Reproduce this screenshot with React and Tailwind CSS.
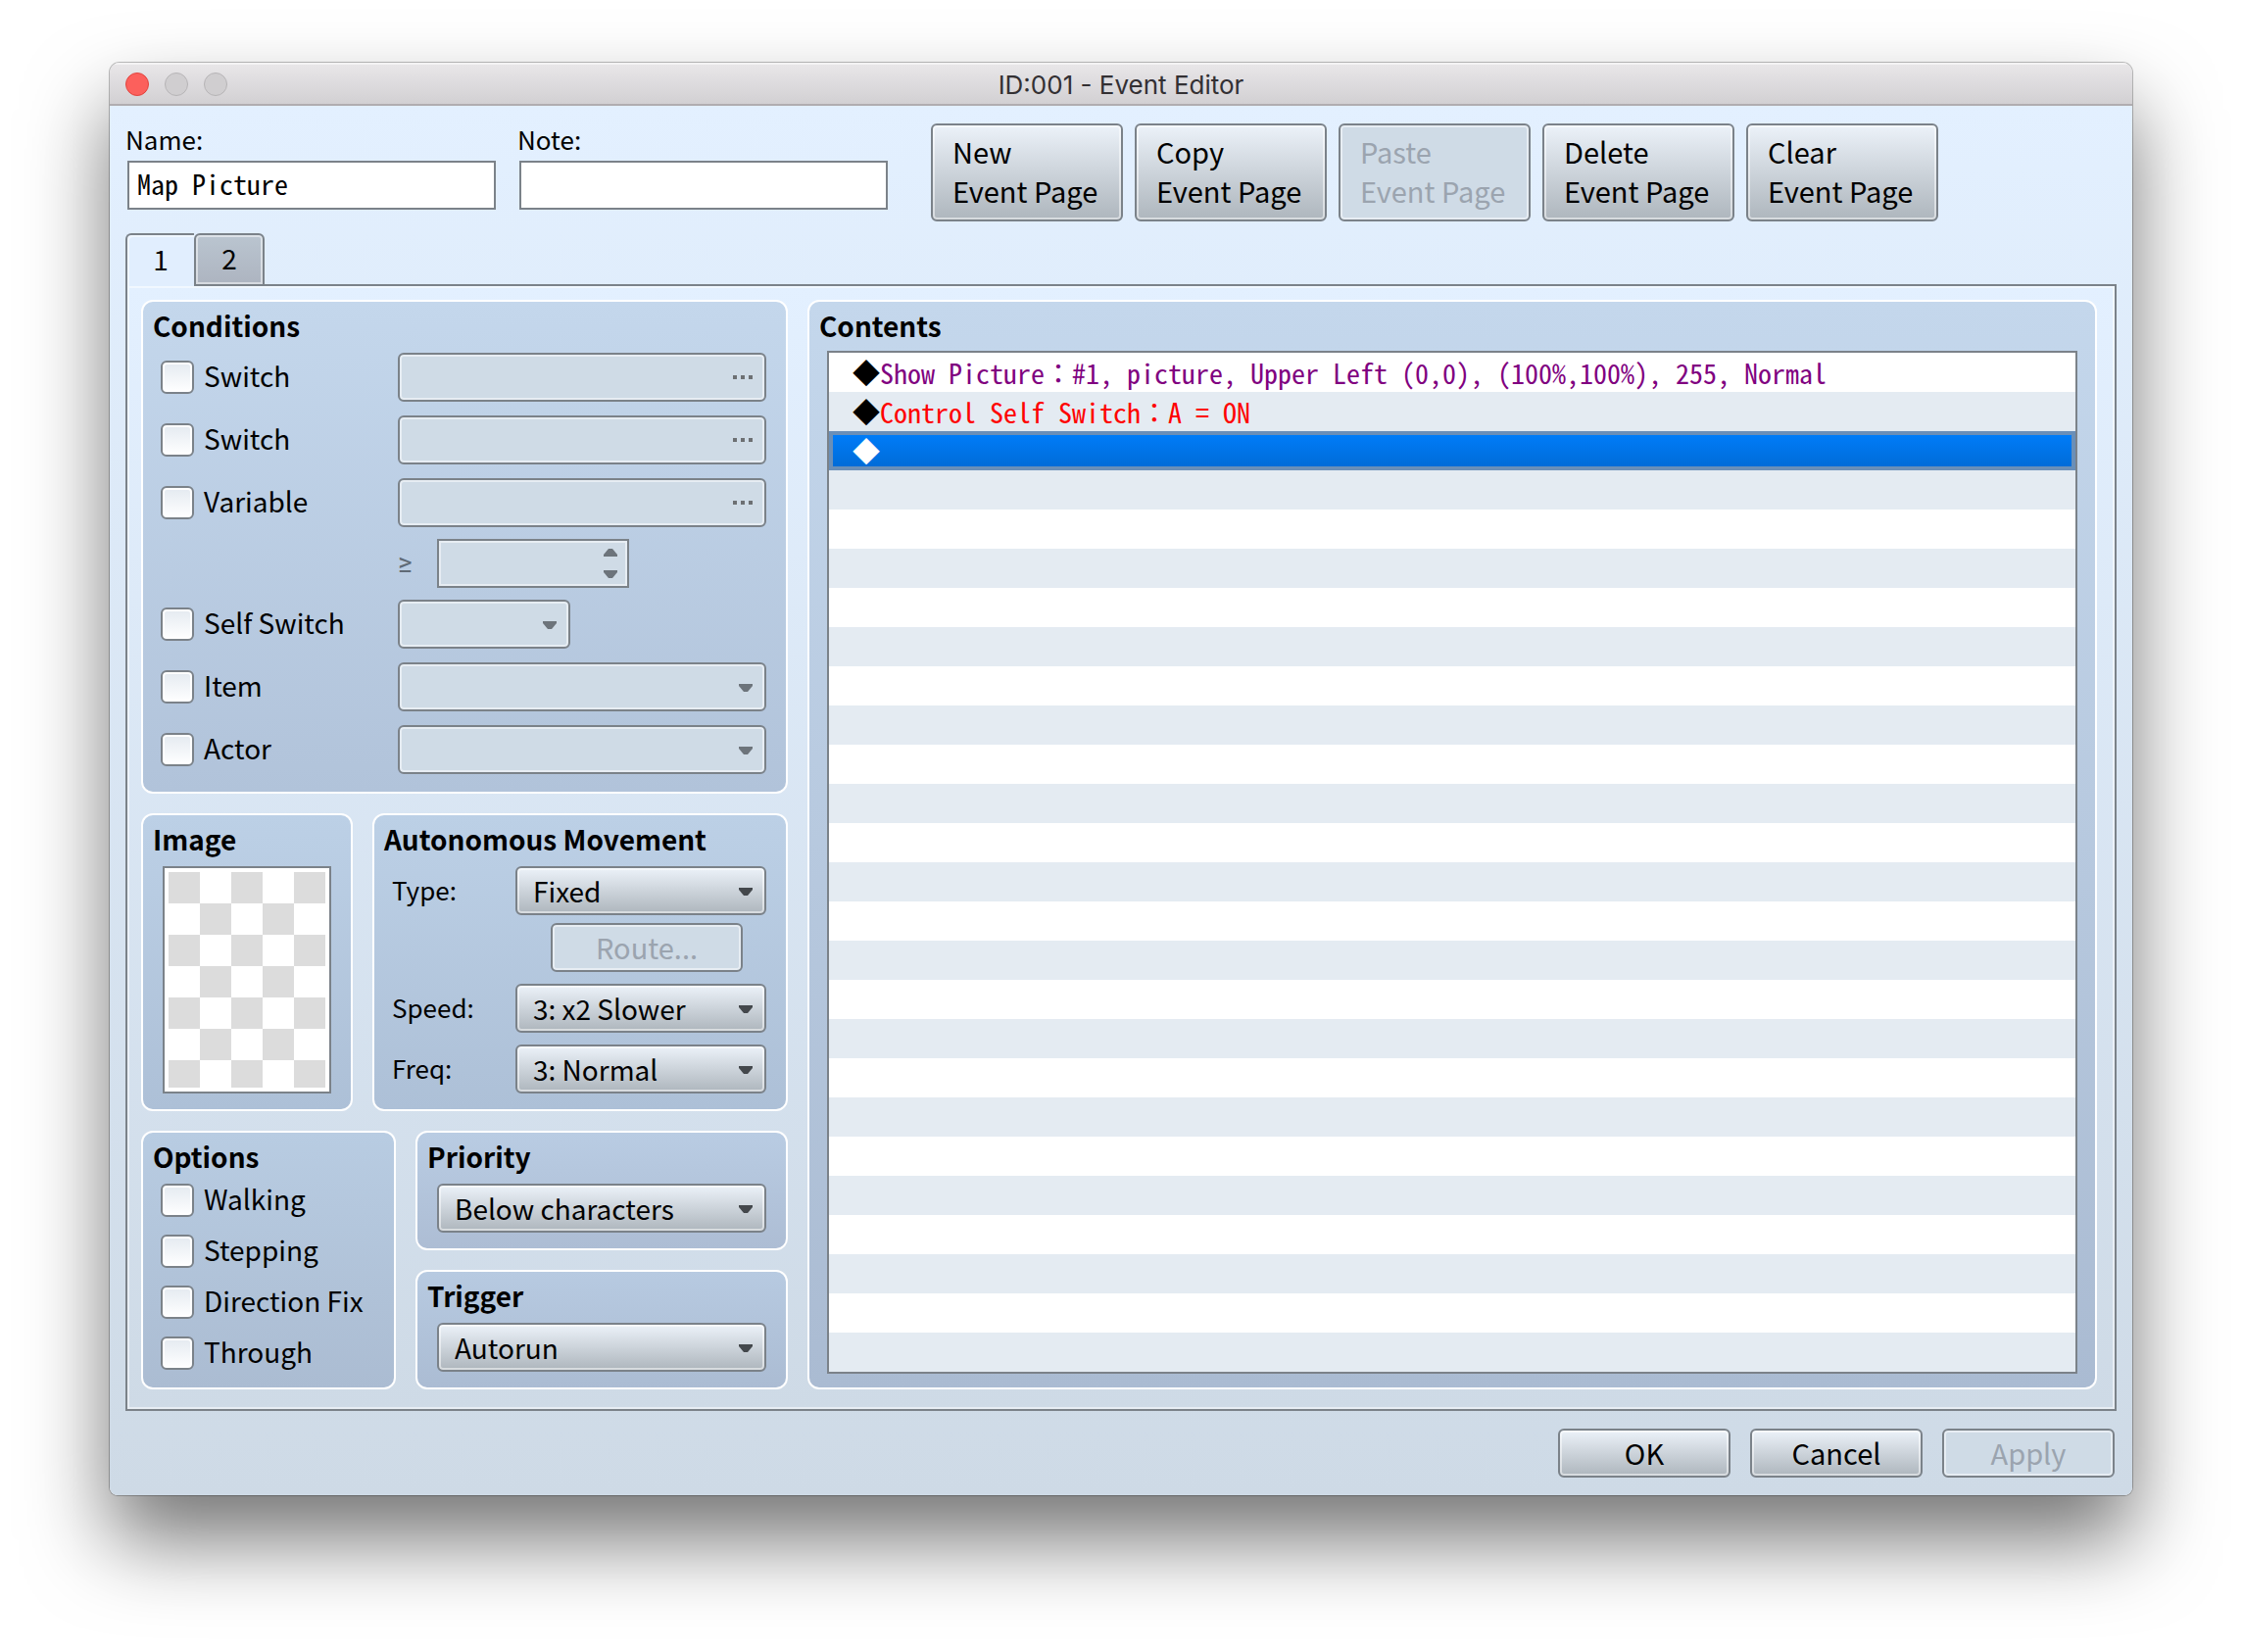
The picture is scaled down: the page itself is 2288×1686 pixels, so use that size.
import React, { useState } from 'react';
import clsx from 'clsx';

const ROW_COUNT = 26;

const commands = [
  { text: 'Show Picture：#1, picture, Upper Left (0,0), (100%,100%), 255, Normal', color: 'text-[#800080]' },
  { text: 'Control Self Switch：A = ON', color: 'text-[#ff0000]' },
  { text: '', color: '' },
];

const pageActions = ['New', 'Copy', 'Paste', 'Delete', 'Clear'];

const Arrow = ({ up, className }) => (
  <svg viewBox="0 0 14 8" className={clsx('pointer-events-none h-2 w-3.5', className)} aria-hidden="true">
    <path d={up ? 'M0 8V6L5 0h4l5 6v2z' : 'M0 0h14v2L9 8H5L0 2z'} fill="currentColor" />
  </svg>
);

const Group = ({ title, className, children }) => (
  <section className={clsx('rounded-xl border-2 border-white bg-linear-to-b', className)}>
    <h2 className="h-12 pl-2.5 text-[28px] font-bold leading-12">{title}</h2>
    {children}
  </section>
);

const Button = ({ className, children, disabled, ...props }) => (
  <button
    type="button"
    disabled={disabled}
    className={clsx(
      'rounded-md border-2 border-[#7b8289] text-[29px]',
      disabled
        ? 'bg-[#cfdbe6] text-[#9ba4af] shadow-[inset_0_0_0_2px_#e7edf3]'
        : 'bg-linear-to-b from-[#ecf2f9] to-[#aeb6bd] shadow-[inset_0_0_0_2px_rgba(255,255,255,0.5)]',
      className
    )}
    {...props}
  >
    {children}
  </button>
);

const Select = ({ id, label, value = '', disabled, className }) => (
  <div className={clsx('relative', className)}>
    <select
      id={id}
      aria-label={label}
      disabled={disabled}
      defaultValue={value}
      className={clsx(
        'block h-[50px] w-full appearance-none rounded-md border-2 border-[#7b8289] pl-4 text-[28px] opacity-100',
        disabled
          ? 'bg-[#cfdbe6] shadow-[inset_0_0_0_2px_#e7edf3]'
          : 'bg-linear-to-b from-[#ecf2f9] to-[#aeb6bd] shadow-[inset_0_0_0_2px_rgba(255,255,255,0.5)]'
      )}
    >
      <option value={value}>{value}</option>
    </select>
    <Arrow className={clsx('absolute right-3.5 top-[22px]', disabled ? 'text-[#6d747b]' : 'text-[#44484c]')} />
  </div>
);

const Check = ({ label, className }) => (
  <label className={clsx('flex items-center gap-2.5 text-[28px]', className)}>
    <input
      type="checkbox"
      className="size-[34px] appearance-none rounded-md border-2 border-[#7b8289] bg-linear-to-b from-[#e4eaf0] to-white shadow-[inset_0_0_0_2px_#fff]"
    />
    <span className="pb-1 leading-[30px]">{label}</span>
  </label>
);

const Condition = ({ label, children }) => (
  <div className="flex items-center">
    <Check label={label} className="w-[242px]" />
    {children}
  </div>
);

const Picker = ({ label }) => (
  <Button disabled aria-label={label} className="flex h-[50px] flex-1 items-center justify-end gap-1 pr-3">
    <span className="size-1 bg-[#6d7073]" />
    <span className="size-1 bg-[#6d7073]" />
    <span className="size-1 bg-[#6d7073]" />
  </Button>
);

const Field = ({ id, label, value }) => (
  <div className="w-[376px]">
    <label htmlFor={id} className="-ml-0.5 block h-[38px] text-[26px] leading-8">{label}</label>
    <input
      id={id}
      defaultValue={value}
      className="block h-[50px] w-full border-2 border-[#7b8289] bg-white px-2 pb-1 font-['Noto_Sans_Mono_CJK_JP','Liberation_Mono',monospace] text-[28px]"
    />
  </div>
);

const Conditions = () => (
  <Group title="Conditions" className="from-[#c4d7ec] to-[#b1c3da] pb-[18px]">
    <div className="mt-1 flex flex-col gap-3.5 pr-5 pl-[18px]">
      <Condition label="Switch"><Picker label="Switch 1" /></Condition>
      <Condition label="Switch"><Picker label="Switch 2" /></Condition>
      <div className="flex flex-col gap-3">
        <Condition label="Variable"><Picker label="Variable" /></Condition>
        <div className="flex items-center pl-[242px]">
          <label htmlFor="variable-value" className="w-10 font-['Roboto',sans-serif] text-[28px] leading-[30px] text-[#5f6a76]">≥</label>
          <div className="relative w-[196px]">
            <input
              id="variable-value"
              type="text"
              inputMode="numeric"
              disabled
              className="block h-[50px] w-full border-2 border-[#7b8289] bg-[#cfdbe6] px-2 shadow-[inset_0_0_0_2px_#e7edf3]"
            />
            <div className="pointer-events-none absolute inset-y-2.5 right-3 flex flex-col justify-between text-[#6d747b]">
              <Arrow up />
              <Arrow />
            </div>
          </div>
        </div>
        <Condition label="Self Switch"><Select label="Self Switch" disabled className="w-[176px]" /></Condition>
      </div>
      <Condition label="Item"><Select label="Item" disabled className="flex-1" /></Condition>
      <Condition label="Actor"><Select label="Actor" disabled className="flex-1" /></Condition>
    </div>
  </Group>
);

const Movement = () => (
  <Group title="Autonomous Movement" className="flex-1 from-[#bcd0e6] to-[#adc0d7]">
    <div className="mt-1 pr-5 pl-[18px] text-[26px]">
      <div className="flex items-center justify-between">
        <label htmlFor="type" className="pb-1">Type:</label>
        <Select id="type" value="Fixed" className="w-64" />
      </div>
      <div className="mt-2 mb-3 flex justify-end pr-6">
        <Button disabled className="h-[50px] w-[196px]">Route...</Button>
      </div>
      <div className="flex items-center justify-between">
        <label htmlFor="speed" className="pb-1">Speed:</label>
        <Select id="speed" value="3: x2 Slower" className="w-64" />
      </div>
      <div className="mt-3 flex items-center justify-between">
        <label htmlFor="freq" className="pb-1">Freq:</label>
        <Select id="freq" value="3: Normal" className="w-64" />
      </div>
    </div>
  </Group>
);

const Contents = () => {
  const [selected, setSelected] = useState(2);

  return (
    <Group title="Contents" className="min-w-0 flex-1 from-[#c4d7ec] to-[#aabbd2] pb-3.5">
      <ul className="mx-[18px] mt-0.5 border-2 border-[#7b8289] font-['Noto_Sans_Mono_CJK_JP','Liberation_Mono',monospace] text-[28px] leading-10">
        {Array.from({ length: ROW_COUNT }, (_, i) => {
          const command = commands[i];
          const active = i === selected;
          return (
            <li
              key={i}
              onClick={() => command && setSelected(i)}
              className={clsx(
                'h-10 whitespace-pre pl-6',
                active
                  ? 'bg-linear-to-b from-[#007efc] to-[#006ad4] text-white shadow-[inset_0_0_0_4px_#6a8fb8]'
                  : i % 2 ? 'bg-[#e4ebf2]' : 'bg-white'
              )}
            >
              {command && (
                <>
                  <span>◆</span>
                  <span className={active ? 'text-white' : command.color}>{command.text}</span>
                </>
              )}
            </li>
          );
        })}
      </ul>
    </Group>
  );
};

const App = () => {
  const [page, setPage] = useState(1);

  return (
    <div className="min-h-screen bg-white px-28 pt-16 pb-40 font-['Noto_Sans_CJK_JP',sans-serif] text-black">
      <div className="overflow-hidden rounded-t-[10px] rounded-b-lg shadow-[0_0_0_1px_rgba(0,0,0,0.25),0_46px_84px_rgba(0,0,0,0.54)]">
        {/* Title bar */}
        <header className="flex h-11 items-center bg-linear-to-b from-[#e9e7e9] to-[#d1cfd2] px-4 shadow-[inset_0_2px_0_#f4f3f4,inset_0_-2px_0_#b0adb0]">
          <div className="flex flex-1 gap-4">
            <span className="size-6 rounded-full border border-[#e0443e] bg-[#fc605c]" />
            <span className="size-6 rounded-full border border-[#b6b4b6] bg-[#d0ced0]" />
            <span className="size-6 rounded-full border border-[#b6b4b6] bg-[#d0ced0]" />
          </div>
          <h1 className="font-['Inter',sans-serif] text-[26px] text-[#333033]">ID:001 - Event Editor</h1>
          <div className="flex-1" />
        </header>

        <main className="bg-linear-to-b from-[#e3f0ff] to-[#cedae6] px-4 py-[18px]">
          {/* Name, note and page actions */}
          <div className="flex items-start gap-11 pl-0.5">
            <div className="flex gap-6">
              <Field id="name" label="Name:" value="Map Picture" />
              <Field id="note" label="Note:" value="" />
            </div>
            <div className="flex gap-3">
              {pageActions.map((action) => (
                <Button
                  key={action}
                  disabled={action === 'Paste'}
                  className="h-[100px] w-[196px] pb-1 pl-5 text-left leading-10"
                >
                  {action}<br />Event Page
                </Button>
              ))}
            </div>
          </div>

          {/* Page tabs */}
          <div className="relative mt-3 -mb-0.5 flex text-[28px]" role="tablist">
            {[1, 2].map((n) => (
              <button
                key={n}
                type="button"
                role="tab"
                aria-selected={page === n}
                onClick={() => setPage(n)}
                className={clsx(
                  'h-[54px] border-2 border-[#7b8289] pb-1 text-center',
                  n === 1 ? 'w-[70px] rounded-tl-md border-r-0' : 'w-[72px] rounded-t-md',
                  page === n
                    ? 'border-b-0 bg-[#e1eefe] shadow-[inset_2px_2px_0_#f0f7ff]'
                    : 'bg-linear-to-b from-[#bac5d0] to-[#adb4c0] shadow-[inset_0_0_0_2px_rgba(255,255,255,0.5)]'
                )}
              >
                {n}
              </button>
            ))}
          </div>

          <div className="flex gap-5 border-2 border-[#7b8289] bg-linear-to-b from-[#e3f0ff] to-[#cedae6] pt-3.5 pr-[18px] pb-5 pl-3.5 shadow-[inset_0_0_0_2px_rgba(255,255,255,0.5)]">
            <div className="flex w-[660px] flex-col gap-5">
              <Conditions />

              <div className="flex gap-5">
                <Group title="Image" className="w-[216px] from-[#bcd0e6] to-[#adc0d7] pb-4">
                  <div className="mx-5 mt-1 border-2 border-[#7b8289] bg-white p-1">
                    <div className="h-[220px] bg-[conic-gradient(#fff_25%,#dcdcdc_0_50%,#fff_0_75%,#dcdcdc_0)] bg-[length:64px_64px]" />
                  </div>
                </Group>
                <Movement />
              </div>

              <div className="flex gap-5">
                <Group title="Options" className="w-[260px] from-[#b8cce2] to-[#abbcd2] pb-[18px]">
                  <div className="mt-1 flex flex-col gap-[18px] pl-[18px]">
                    <Check label="Walking" />
                    <Check label="Stepping" />
                    <Check label="Direction Fix" />
                    <Check label="Through" />
                  </div>
                </Group>
                <div className="flex flex-1 flex-col gap-5">
                  <Group title="Priority" className="from-[#b9cce3] to-[#adbdd4] pb-4">
                    <Select label="Priority" value="Below characters" className="mx-5 mt-1" />
                  </Group>
                  <Group title="Trigger" className="from-[#b7cae1] to-[#abbcd3] pb-4">
                    <Select label="Trigger" value="Autorun" className="mx-5 mt-1" />
                  </Group>
                </div>
              </div>
            </div>

            <Contents />
          </div>

          <footer className="mt-[18px] flex justify-end gap-5 pr-0.5">
            <Button className="h-[50px] w-44">OK</Button>
            <Button className="h-[50px] w-44">Cancel</Button>
            <Button disabled className="h-[50px] w-44">Apply</Button>
          </footer>
        </main>
      </div>
    </div>
  );
};

export default App;
